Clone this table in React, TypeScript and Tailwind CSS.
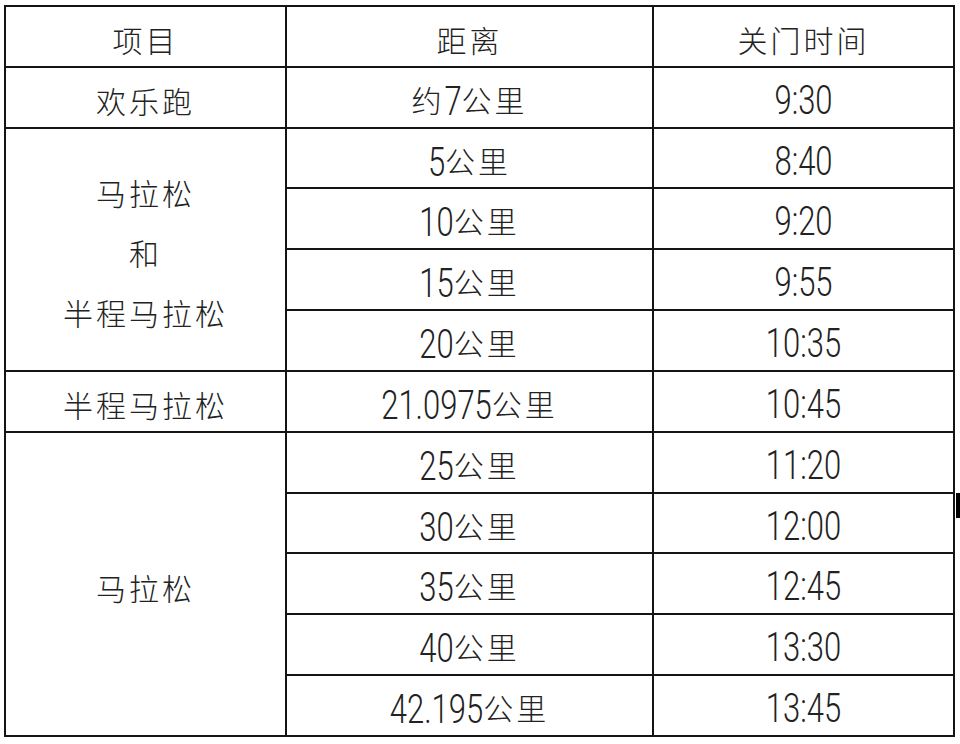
import React from "react";

type Piece = { text: string; latin: boolean };

function split(text: string): Piece[] {
  const out: Piece[] = [];
  for (const ch of text) {
    const latin = /[0-9.:]/.test(ch);
    const last = out[out.length - 1];
    if (last && last.latin === latin) last.text += ch;
    else out.push({ text: ch, latin });
  }
  return out;
}

function Label({ text }: { text: string }) {
  return (
    <span className="whitespace-nowrap leading-none">
      {split(text).map((p, i) =>
        p.latin ? (
          <span
            key={i}
            className="inline-block origin-center scale-y-[1.3] font-['Roboto','Liberation_Sans',sans-serif] text-[31px] font-light leading-none"
          >
            {p.text}
          </span>
        ) : (
          <span
            key={i}
            className="font-['Noto_Sans_CJK_SC',sans-serif] text-[30px] font-light tracking-[3px] leading-none"
          >
            {p.text}
          </span>
        )
      )}
    </span>
  );
}

function Cell({ lines, span }: { lines: string[]; span?: string }) {
  return (
    <div className={`flex min-h-0 flex-col items-center justify-center overflow-hidden bg-white pt-[6px] ${span ?? ""}`}>
      {lines.length === 1 ? (
        <Label text={lines[0]} />
      ) : (
        lines.map((l, i) => (
          <div key={i} className="flex h-[60px] items-center justify-center">
            <Label text={l} />
          </div>
        ))
      )}
    </div>
  );
}

const rows: [string | null, string, string][] = [
  ["项目", "距离", "关门时间"],
  ["欢乐跑", "约7公里", "9:30"],
  ["MIX", "5公里", "8:40"],
  [null, "10公里", "9:20"],
  [null, "15公里", "9:55"],
  [null, "20公里", "10:35"],
  ["半程马拉松", "21.0975公里", "10:45"],
  ["FULL", "25公里", "11:20"],
  [null, "30公里", "12:00"],
  [null, "35公里", "12:45"],
  [null, "40公里", "13:30"],
  [null, "42.195公里", "13:45"],
];

export default function App() {
  return (
    <div className="relative h-[744px] w-[960px] overflow-hidden bg-white pl-[4px] pt-[5px] text-[#222]">
      <div className="grid h-[732px] w-[951px] grid-cols-[279px_365px_299px] grid-rows-[repeat(12,minmax(0,1fr))] gap-[2px] bg-[#141414] p-[2px]">
        {rows.map(([first, dist, time], i) => (
          <React.Fragment key={i}>
            {first === "MIX" && (
              <Cell lines={["马拉松", "和", "半程马拉松"]} span="row-span-4" />
            )}
            {first === "FULL" && <Cell lines={["马拉松"]} span="row-span-5" />}
            {first && first !== "MIX" && first !== "FULL" && <Cell lines={[first]} />}
            <Cell lines={[dist]} />
            <Cell lines={[time]} />
          </React.Fragment>
        ))}
      </div>
      <div className="absolute left-[956px] top-[493px] h-[25px] w-[4px] bg-black" />
    </div>
  );
}
